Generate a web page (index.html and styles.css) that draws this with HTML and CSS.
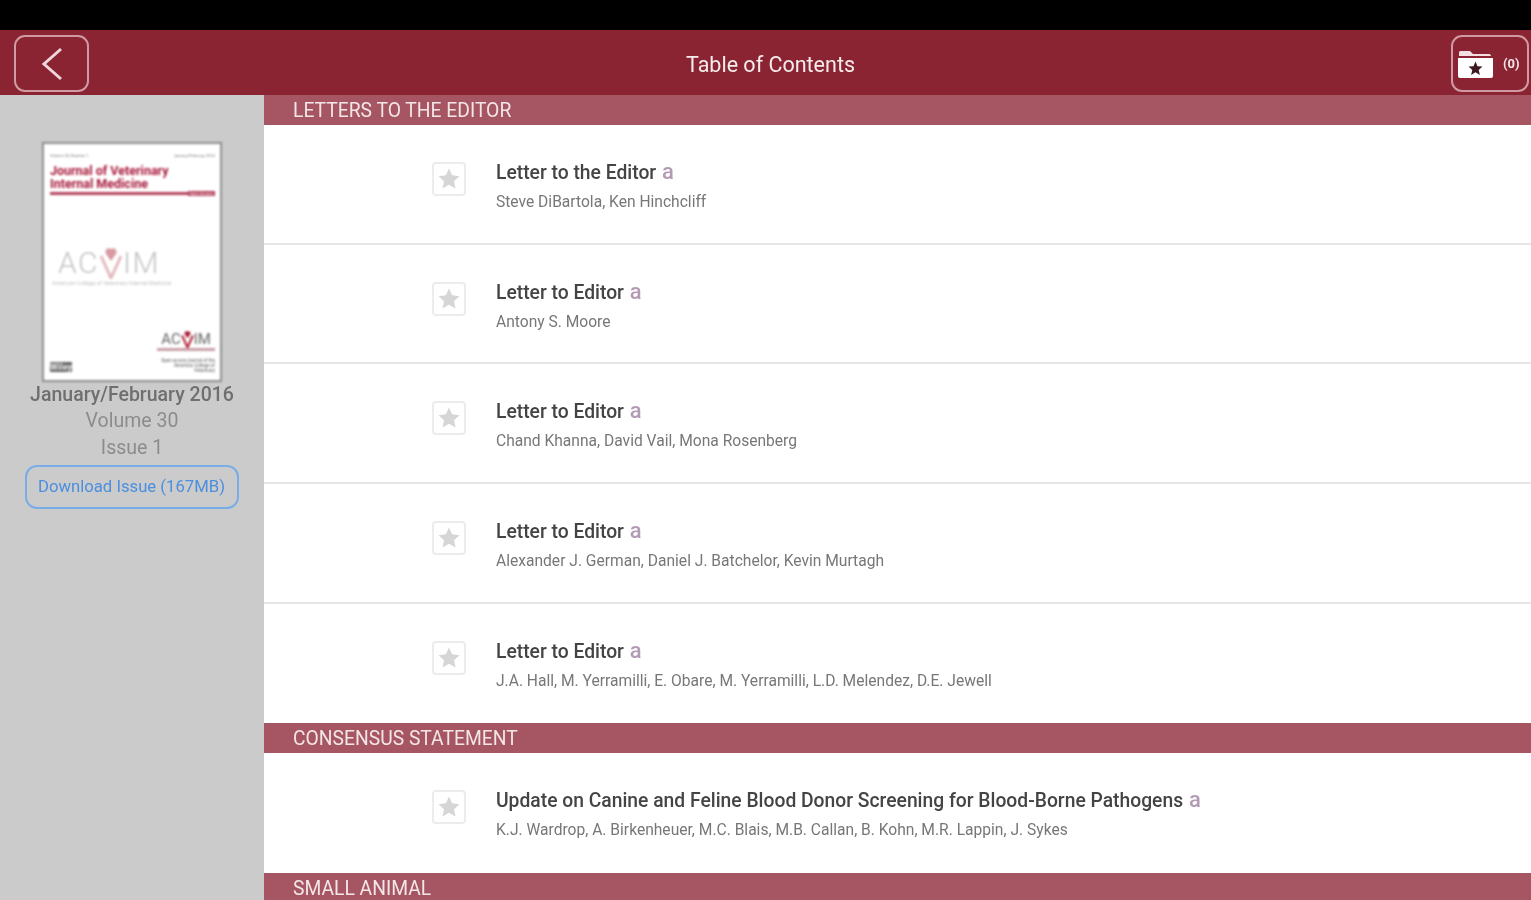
FILE: index.html
```html
<!DOCTYPE html>
<html lang="en">
<head>
<meta charset="utf-8">
<title>Table of Contents</title>
<link rel="stylesheet" href="styles.css">
</head>
<body>
<svg class="defs" width="0" height="0" aria-hidden="true"><defs>
<g id="star-box">
<rect x="1" y="1" width="32" height="32" rx="3" fill="#fff" stroke="#ececec" stroke-width="2"/>
<path d="M17 6.500l3.100 6.800 7.400.9-5.500 5 1.500 7.300-6.500-3.700-6.500 3.700 1.500-7.300-5.500-5 7.400-.9z" fill="#d6d6d6"/>
</g>
</defs></svg>
<div class="status"></div>
<header class="topbar">
  <button class="nav-btn back" aria-label="Back">
    <svg width="24" height="36" viewBox="0 0 24 36"><path d="M21 3L4 18l17 15" fill="none" stroke="#f0d6da" stroke-width="3"/></svg>
  </button>
  <h1 class="title">Table of Contents</h1>
  <button class="nav-btn saved" aria-label="Saved articles">
    <svg width="37" height="30" viewBox="0 0 37 30"><path d="M2 7V3.500Q2 2 3.500 2H13l3 3h16q2 0 2 2z" fill="#f3dfe1"/><path d="M1 9h35v18q0 2-2 2H3q-2 0-2-2z" fill="#fff"/><path d="M18.500 12.500l2 4.700 5 .4-3.800 3.300 1.200 5-4.400-2.700-4.400 2.700 1.200-5-3.800-3.300 5-.4z" fill="#3b1b20"/></svg>
    <span class="count">(0)</span>
  </button>
</header>
<div class="layout">
  <aside class="sidebar">
    <div class="cover">
      <div class="cover-meta"><span>Volume 30, Number 1</span><span>January/February 2016</span></div>
      <div class="cover-title">Journal of Veterinary<br>Internal Medicine</div>
      <div class="cover-rule"><span>Open Access</span></div>
      <div class="acvim-big">AC<svg class="v-mark" width="24" height="31" viewBox="0 0 24 31"><path d="M2 8l10 22L22 8" fill="none" stroke="#e3b9bd" stroke-width="3"/><path d="M12 1c-3-2-7 1-5 5l5 7 5-7c2-4-2-7-5-5z" fill="#d99aa2"/></svg>IM</div>
      <div class="acvim-sub">American College of Veterinary Internal Medicine</div>
      <div class="cover-foot">
        <div class="wiley">Wiley</div>
        <div class="foot-right">
          <div class="acvim-small">AC<svg width="13" height="17" viewBox="0 0 24 31"><path d="M2 8l10 22L22 8" fill="none" stroke="#b3283c" stroke-width="4"/><path d="M12 1c-3-2-7 1-5 5l5 7 5-7c2-4-2-7-5-5z" fill="#a81f35"/></svg>IM</div>
          <div class="foot-rule"></div>
          <div class="foot-lines">Open access journal of the American College of Veterinary</div>
        </div>
      </div>
    </div>
    <p class="issue-date">January/February 2016</p>
    <p class="issue-line">Volume 30</p>
    <p class="issue-line">Issue 1</p>
    <button class="download">Download Issue (167MB)</button>
  </aside>
  <main class="content">
    <h2 class="section">LETTERS TO THE EDITOR</h2>
    <article class="row">
      <svg class="star" width="34" height="34" viewBox="0 0 34 34"><use href="#star-box"/></svg>
      <div class="text"><h3 class="art-title">Letter to the Editor <span class="oa">a</span></h3><p class="authors">Steve DiBartola, Ken Hinchcliff</p></div>
    </article>
    <article class="row">
      <svg class="star" width="34" height="34" viewBox="0 0 34 34"><use href="#star-box"/></svg>
      <div class="text"><h3 class="art-title">Letter to Editor <span class="oa">a</span></h3><p class="authors">Antony S. Moore</p></div>
    </article>
    <article class="row">
      <svg class="star" width="34" height="34" viewBox="0 0 34 34"><use href="#star-box"/></svg>
      <div class="text"><h3 class="art-title">Letter to Editor <span class="oa">a</span></h3><p class="authors">Chand Khanna, David Vail, Mona Rosenberg</p></div>
    </article>
    <article class="row">
      <svg class="star" width="34" height="34" viewBox="0 0 34 34"><use href="#star-box"/></svg>
      <div class="text"><h3 class="art-title">Letter to Editor <span class="oa">a</span></h3><p class="authors">Alexander J. German, Daniel J. Batchelor, Kevin Murtagh</p></div>
    </article>
    <article class="row last">
      <svg class="star" width="34" height="34" viewBox="0 0 34 34"><use href="#star-box"/></svg>
      <div class="text"><h3 class="art-title">Letter to Editor <span class="oa">a</span></h3><p class="authors">J.A. Hall, M. Yerramilli, E. Obare, M. Yerramilli, L.D. Melendez, D.E. Jewell</p></div>
    </article>
    <h2 class="section">CONSENSUS STATEMENT</h2>
    <article class="row last">
      <svg class="star" width="34" height="34" viewBox="0 0 34 34"><use href="#star-box"/></svg>
      <div class="text"><h3 class="art-title">Update on Canine and Feline Blood Donor Screening for Blood-Borne Pathogens <span class="oa">a</span></h3><p class="authors">K.J. Wardrop, A. Birkenheuer, M.C. Blais, M.B. Callan, B. Kohn, M.R. Lappin, J. Sykes</p></div>
    </article>
    <h2 class="section">SMALL ANIMAL</h2>
  </main>
</div>
</body>
</html>
```
FILE: styles.css
```css
* { box-sizing: border-box; }
html, body { margin: 0; height: 100%; overflow: hidden; }
body { width: 1531px; height: 900px; font-family: Roboto, "Liberation Sans", sans-serif; background: #fff; }
.defs { position: absolute; }
.status { height: 30px; background: #000; }
.topbar { height: 65px; background: #8a2433; display: flex; align-items: center; justify-content: space-between; position: relative; padding: 0 0 0 14px; }
.nav-btn { background: transparent; border: 2px solid #cf9aa2; border-radius: 11px; height: 57px; padding: 0; display: flex; align-items: center; color: #fff; font-family: inherit; filter: blur(.7px); }
.back { width: 75px; justify-content: center; margin-top: 2px; }
.saved { width: 78px; margin-right: 2px; margin-top: 2px; padding-left: 4px; gap: 9px; }
.count { font-size: 13px; font-weight: 700; color: #f4e4e6; }
.title { margin: 0; position: absolute; left: 686px; top: 20px; font-size: 21.500px; font-weight: 400; color: #f6ecec; line-height: 30px; filter: blur(.7px); }
.layout { display: flex; height: 805px; }
.sidebar { width: 264px; flex: none; background: #cbcbcb; padding-top: 47px; display: flex; flex-direction: column; align-items: center; color: #777; }
.cover { width: 180px; height: 240px; background: #fff; border: 2px solid #8e8e8e; padding: 9px 5px 5px 6px; display: flex; flex-direction: column; filter: blur(.8px); overflow: hidden; }
.cover-meta { display: flex; justify-content: space-between; font-size: 4px; line-height: 5px; color: #777; }
.cover-title { margin-top: 7px; color: #a8193a; font-size: 12.500px; font-weight: 700; line-height: 12.500px; white-space: nowrap; }
.cover-rule { height: 3px; margin-top: 2px; background: #b5455e; display: flex; justify-content: flex-end; align-items: center; }
.cover-rule span { font-size: 4px; line-height: 5px; background: #b5455e; color: #fff; padding: 0 2px; }
.acvim-big { margin-top: 52px; margin-left: 8px; font-size: 30px; line-height: 32px; color: #c4c4c4; display: flex; align-items: flex-end; font-weight: 300; white-space: nowrap; letter-spacing: 1.500px; }
.acvim-sub { margin-left: 2px; font-size: 5.500px; line-height: 7px; margin-top: 1px; color: #c0c0c0; white-space: nowrap; }
.cover-foot { margin-top: auto; display: flex; justify-content: space-between; align-items: flex-end; }
.wiley { font-size: 9px; font-weight: 900; line-height: 10px; background: #666; color: #ddd; width: 22px; overflow: hidden; margin-bottom: 3px; }
.foot-right { width: 58px; display: flex; flex-direction: column; align-items: center; margin-bottom: 2px; }
.acvim-small { font-size: 15px; line-height: 17px; color: #666; display: flex; align-items: flex-end; }
.foot-rule { width: 100%; height: 3px; margin: 0 0 7px; background: #c9a0a8; }
.foot-lines { font-size: 4.500px; line-height: 5px; width: 100%; text-align: right; color: #888; font-weight: 700; }
.issue-date, .issue-line { margin: 0; white-space: nowrap; filter: blur(.7px); }
.issue-date { font-size: 19.500px; font-weight: 500; line-height: 26px; color: #6f6f6f; }
.issue-line { font-size: 19.500px; line-height: 26.500px; color: #8c8c8c; }
.download { margin-top: 4px; width: 214px; margin-left: -1px; height: 44px; background: transparent; border: 2px solid #78ade8; border-radius: 12px; color: #4a8fe0; font-family: inherit; font-size: 16.700px; line-height: 20px; padding: 0; white-space: nowrap; filter: blur(.7px); }
.content { flex: 1; min-width: 0; }
.section { margin: 0; height: 30px; background: #a65562; color: #f3e6e7; font-size: 19.300px; font-weight: 400; line-height: 31px; padding-left: 29px; white-space: nowrap; filter: blur(.5px); }
.art-title, .authors { filter: blur(.7px); }
.row { height: 119.700px; border-bottom: 2px solid #e6e6e6; display: flex; align-items: flex-start; padding: 37px 0 0 168px; gap: 30px; }
.row.last { border-bottom: 0; }
.star { flex: none; filter: blur(.7px); }
.text { margin-top: -3px; }
.art-title { margin: 0; font-size: 19.300px; font-weight: 500; line-height: 27px; color: #444; white-space: nowrap; }
.oa { color: #b39bb4; font-weight: 500; font-size: 22px; line-height: 20px; margin-left: 1px; }
.authors { margin: 6px 0 0; font-size: 15.600px; line-height: 20px; color: #777; white-space: nowrap; }
```
